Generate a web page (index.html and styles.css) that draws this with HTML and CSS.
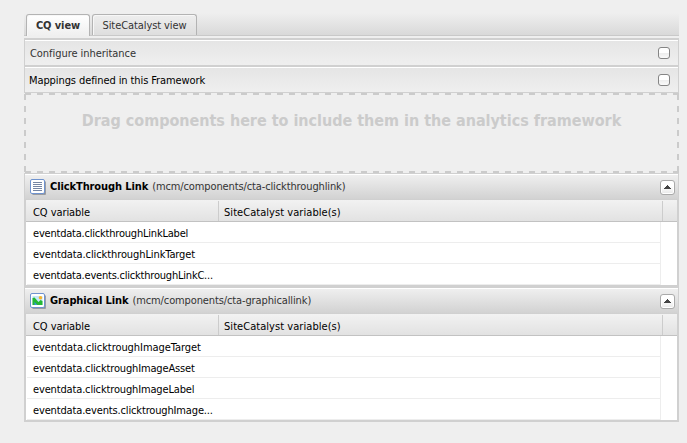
FILE: index.html
```
<!DOCTYPE html>
<html lang="en">
<head>
<meta charset="utf-8">
<title>Analytics framework</title>
<link rel="stylesheet" href="styles.css">
</head>
<body>
<nav class="tabs">
  <a class="tab active">CQ view</a>
  <a class="tab">SiteCatalyst view</a>
</nav>
<main class="panel">
  <div class="option"><span class="inherit">Configure inheritance</span><i class="check"></i></div>
  <div class="option second"><span class="mappings">Mappings defined in this Framework</span><i class="check"></i></div>
  <div class="drop">Drag components here to include them in the analytics framework</div>

  <section class="component">
    <header class="head">
      <svg class="icon" width="16" height="16" viewBox="0 0 16 16">
        <path d="M15 2.500v12.500H2.500" fill="none" stroke="#85888f" stroke-width="1.500"/>
        <rect x=".5" y=".5" width="14" height="14" rx="1.500" fill="#fff" stroke="#6f93cf"/>
        <path d="M3 3.500h9M3 5.500h9M3 7.500h9M3 9.500h9M3 11.500h9" stroke="#7585a3"/>
      </svg>
      <b>ClickThrough Link</b><span class="path">(mcm/components/cta-clickthroughlink)</span>
      <span class="toggle"><svg width="7" height="4" viewBox="0 0 7 4" shape-rendering="crispEdges"><path d="M3 0h1v1h1v1h1v1h1v1H0V3h1V2h1V1h1z" fill="#444"/></svg></span>
    </header>
    <div class="grid">
      <div class="cols"><span class="c1">CQ variable</span><span class="c2">SiteCatalyst variable(s)</span></div>
      <div class="row tight">eventdata.clickthroughLinkLabel</div>
      <div class="row">eventdata.clickthroughLinkTarget</div>
      <div class="row tight">eventdata.events.clickthroughLinkC...</div>
    </div>
  </section>

  <section class="component">
    <header class="head">
      <svg class="icon" width="16" height="16" viewBox="0 0 16 16">
        <path d="M15 2.500v12.500H2.500" fill="none" stroke="#85888f" stroke-width="1.500"/>
        <rect x=".5" y=".5" width="14" height="14" rx="1.500" fill="#fff" stroke="#6f93cf"/>
        <path d="M2.500 3h10v9h-10z" fill="#c5e8fa"/>
        <path d="M2.500 5l2-.5 4 4.500 2-2 2 1v4h-10z" fill="#25b834"/>
        <path d="M4.500 12V9l3 3z" fill="#3c94e0"/>
        <circle cx="10.500" cy="4.700" r="1.800" fill="#f7b52c"/>
      </svg>
      <b>Graphical Link</b><span class="path">(mcm/components/cta-graphicallink)</span>
      <span class="toggle"><svg width="7" height="4" viewBox="0 0 7 4" shape-rendering="crispEdges"><path d="M3 0h1v1h1v1h1v1h1v1H0V3h1V2h1V1h1z" fill="#444"/></svg></span>
    </header>
    <div class="grid">
      <div class="cols"><span class="c1">CQ variable</span><span class="c2">SiteCatalyst variable(s)</span></div>
      <div class="row image">eventdata.clicktroughImageTarget</div>
      <div class="row events">eventdata.clicktroughImageAsset</div>
      <div class="row events">eventdata.clicktroughImageLabel</div>
      <div class="row events">eventdata.events.clicktroughImage...</div>
    </div>
  </section>
</main>
</body>
</html>
```
FILE: styles.css
```
* { box-sizing: border-box; }
body {
  margin: 0;
  padding: 13px 8px 0 24px;
  background: #efefef;
  color: #000;
  font: 11px/14px "DejaVu Sans Condensed", "DejaVu Sans", sans-serif;
  white-space: nowrap;
}
.tabs {
  display: flex;
  gap: 2px;
  height: 23px;
  padding: 1px 0 0 2px;
  background: linear-gradient(#efefef, #d9d9d9);
  border-bottom: 1px solid #c9c9c9;
}
.tab {
  width: 105px;
  height: 21px;
  padding-top: 4px;
  border: 1px solid #b3b3b3;
  border-bottom: 0;
  border-radius: 3px 3px 0 0;
  background: linear-gradient(#eee, #dedede);
  box-shadow: inset 1px 1px #f7f7f7;
  color: #333;
  text-align: center;
  letter-spacing: -0.09px;
}
.tab.active {
  width: 64px;
  height: 22px;
  background: linear-gradient(#fff, #efefef);
  font-weight: bold;
}
.panel {
  width: 655px;
  margin-top: 2px;
  border: 1px solid #d0d0d0;
  border-width: 2px 1px 0;
}
.option {
  display: flex;
  align-items: center;
  justify-content: space-between;
  height: 27px;
  padding: 0 8px 0 5px;
  border-top: 1px solid #fff;
  border-bottom: 2px solid #d0d0d0;
  background: linear-gradient(#e5e5e5, #efefef);
}
.option span { padding-top: 2px; }
.option.second {
  height: 26px;
  padding-left: 4px;
  border-bottom-width: 1px;
}
.inherit { color: #333; letter-spacing: -0.05px; }
.mappings { letter-spacing: -0.09px; }
.check {
  width: 12px;
  height: 12px;
  border: 1px solid #858585;
  border-radius: 3px;
  background: linear-gradient(#fff 45%, #eee 55%, #fafafa);
}
.drop {
  height: 80px;
  margin: 0 -1px;
  padding-top: 18px;
  color: #cbcbcb;
  font-size: 16px;
  line-height: 20px;
  font-weight: bold;
  text-align: center;
  letter-spacing: -0.02px;
  background:
    repeating-linear-gradient(90deg, transparent 0 1px, #cbcbcb 1px 7px, transparent 7px 12px) top / 100% 2px no-repeat,
    repeating-linear-gradient(90deg, transparent 0 1px, #cbcbcb 1px 7px, transparent 7px 12px) bottom / 100% 2px no-repeat,
    repeating-linear-gradient(transparent 0 1px, #cbcbcb 1px 7px, transparent 7px 12px) left / 2px 100% no-repeat,
    repeating-linear-gradient(transparent 0 1px, #cbcbcb 1px 7px, transparent 7px 12px) right / 2px 100% no-repeat,
    #efefef;
}
.component { border-top: 1px solid #d0d0d0; }
.head {
  display: flex;
  align-items: center;
  height: 25px;
  padding: 0 3px 0 5px;
  border-top: 1px solid #fff;
  background: linear-gradient(#efefef, #d2d2d2);
}
.icon { margin-right: 4px; }
.head b { letter-spacing: -0.1px; }
.path { margin-left: 4px; color: #333; letter-spacing: -0.12px; }
.toggle {
  display: flex;
  align-items: center;
  justify-content: center;
  width: 15px;
  height: 15px;
  margin-left: auto;
  border: 1px solid #aaa;
  border-radius: 3px;
  background: linear-gradient(#fff 40%, #e8e8e8);
  box-shadow: inset 0 0 0 1px #fff;
}
.grid {
  border: 1px solid #d0d0d0;
  border-bottom-width: 2px;
  background: #fff;
}
.cols {
  display: flex;
  height: 22px;
  padding-top: 1px;
  border-bottom: 1px solid #c2c2c2;
  background: linear-gradient(#f2f2f2, #e2e2e2);
  line-height: 23px;
}
.c1, .c2 { height: 20px; border-right: 1px solid #ccc; }
.c1 { width: 193px; padding-left: 7px; letter-spacing: -0.07px; }
.c2 { width: 444px; padding-left: 5px; letter-spacing: 0.05px; }
.row {
  width: 634px;
  height: 21px;
  margin-left: 1px;
  padding-left: 6px;
  border: 1px solid #ededed;
  border-width: 0 1px 1px 0;
  line-height: 23px;
  letter-spacing: -0.1px;
}
.tight { letter-spacing: -0.21px; }
.image { letter-spacing: -0.06px; }
.events { letter-spacing: -0.15px; }
```
